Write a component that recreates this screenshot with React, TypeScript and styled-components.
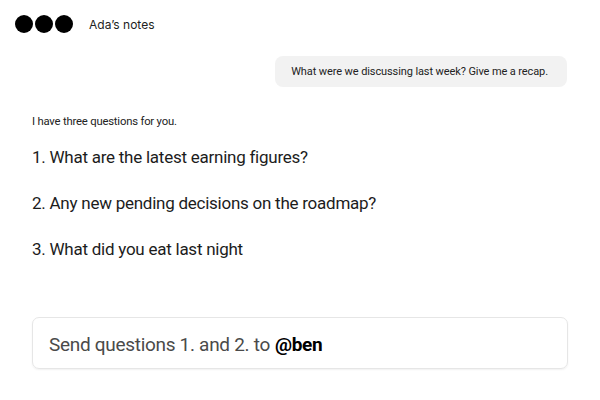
import React from "react";
import styled, { createGlobalStyle } from "styled-components";

const GlobalStyle = createGlobalStyle`
  html, body {
    margin: 0;
    padding: 0;
    background: #ffffff;
  }
  body {
    font-family: "Roboto", "Liberation Sans", sans-serif;
  }
`;

const Page = styled.div`
  width: 600px;
  height: 400px;
  display: flex;
  flex-direction: column;
  box-sizing: border-box;
  overflow: hidden;
`;

const Header = styled.div`
  display: flex;
  align-items: center;
  gap: 16px;
  padding: 15px 16px 0 15px;
  height: 18px;
`;

const Dots = styled.div`
  display: flex;
  gap: 2px;
`;

const Dot = styled.span`
  width: 18px;
  height: 18px;
  border-radius: 50%;
  background: #000;
`;

const Title = styled.span`
  font-family: "Inter", sans-serif;
  font-size: 12px;
  color: #222;
`;

const Thread = styled.div`
  display: flex;
  flex-direction: column;
  padding: 0 33px 0 32px;
`;

const UserBubble = styled.div`
  align-self: flex-end;
  margin-top: 23px;
  height: 31px;
  display: flex;
  align-items: center;
  padding: 0 19px 0 16px;
  border-radius: 8px;
  background: #f2f2f2;
  font-size: 11px;
  color: #222;
  letter-spacing: -0.1px;
`;

const Intro = styled.p`
  margin: 28px 0 0;
  font-size: 11.3px;
  color: #222;
  letter-spacing: -0.2px;
`;

const Questions = styled.ol`
  list-style: none;
  margin: 18px 0 0;
  padding: 0;
  display: flex;
  flex-direction: column;
  gap: 24px;
`;

const Question = styled.li`
  font-size: 17px;
  line-height: 22px;
  color: #1c1c1c;
  letter-spacing: -0.25px;
`;

const InputBox = styled.div`
  margin: 57px 32px 0 32px;
  height: 48px;
  display: flex;
  align-items: center;
  padding: 2px 16px 0;
  border: 1px solid #e6e6e6;
  border-radius: 7px;
  box-shadow: 0 1px 2px rgba(0, 0, 0, 0.06);
  font-size: 19px;
  color: #4a4a4a;
  letter-spacing: -0.3px;
`;

const Mention = styled.strong`
  margin-left: 5px;
  font-weight: 700;
  color: #000;
`;

const questions = [
  "1. What are the latest earning figures?",
  "2. Any new pending decisions on the roadmap?",
  "3. What did you eat last night",
];

export default function App() {
  return (
    <Page>
      <GlobalStyle />
      <Header>
        <Dots>
          <Dot />
          <Dot />
          <Dot />
        </Dots>
        <Title>Ada’s notes</Title>
      </Header>
      <Thread>
        <UserBubble>What were we discussing last week? Give me a recap.</UserBubble>
        <Intro>I have three questions for you.</Intro>
        <Questions>
          {questions.map((q) => (
            <Question key={q}>{q}</Question>
          ))}
        </Questions>
      </Thread>
      <InputBox>
        Send questions 1. and 2. to<Mention>@ben</Mention>
      </InputBox>
    </Page>
  );
}
